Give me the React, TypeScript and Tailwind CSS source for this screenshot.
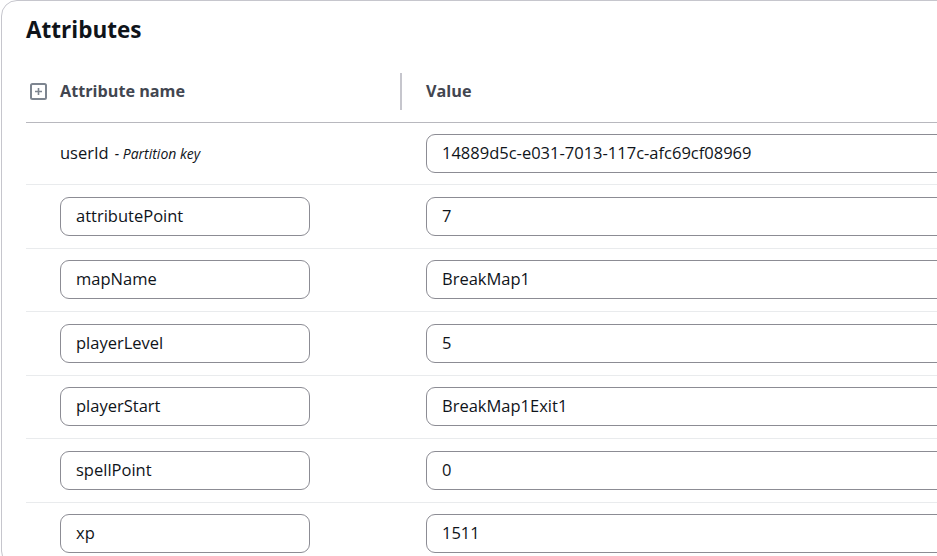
const rows = [
  { name: 'attributePoint', value: '7' },
  { name: 'mapName', value: 'BreakMap1' },
  { name: 'playerLevel', value: '5' },
  { name: 'playerStart', value: 'BreakMap1Exit1' },
  { name: 'spellPoint', value: '0' },
  { name: 'xp', value: '1511' },
]

function ExpandIcon() {
  return (
    <svg width="17" height="17" viewBox="0 0 17 17" className="shrink-0">
      <rect x="1" y="1" width="15" height="15" rx="1.5" fill="none" stroke="#7d8590" strokeWidth="2" />
      <path d="M8.5 5v7M5 8.5h7" stroke="#7d8590" strokeWidth="1.6" />
    </svg>
  )
}

function Field({ value, className }: { value: string; className: string }) {
  return (
    <div
      className={`flex h-[39px] items-center rounded-[9px] border border-[#8c8c94] bg-white pl-[15px] text-[16.5px] text-[#0f141a] ${className}`}
    >
      {value}
    </div>
  )
}

export default function App() {
  return (
    <div
      className="h-[556px] w-[937px] overflow-hidden bg-white"
      style={{ fontFamily: '"Open Sans", "Noto Sans", sans-serif' }}
    >
      <div className="ml-[1px] w-[1100px] rounded-[16px] border border-[#c6c6cd] pl-[24px] pt-[13px]">
        <h2 className="h-[32px] text-[22.5px] font-bold leading-[32px] text-[#0f141a]">Attributes</h2>

        <div className="mt-[24px]">
          {/* header */}
          <div className="grid h-[53px] grid-cols-[374px_1fr] border-b border-[#b8b8be]">
            <div className="flex items-center gap-[13px] pl-[4px] pb-[10px]">
              <ExpandIcon />
              <span className="text-[16.2px] font-bold text-[#424650]">Attribute name</span>
            </div>
            <div className="flex items-center pb-[10px]">
              <div className="h-[37px] w-[2px] bg-[#c6c6cd]" />
              <span className="ml-[24px] text-[16.2px] font-bold text-[#424650]">Value</span>
            </div>
          </div>

          {/* partition key row */}
          <div className="grid h-[62px] grid-cols-[374px_1fr] items-center border-b border-[#e9ebed]">
            <div className="flex items-baseline pl-[34px] text-[#0f141a]">
              <span className="text-[16.5px]">userId</span>
              <span className="ml-[6px] text-[14px] italic">- Partition key</span>
            </div>
            <div className="pl-[26px]">
              <Field value="14889d5c-e031-7013-117c-afc69cf08969" className="w-[640px]" />
            </div>
          </div>

          {rows.map((r) => (
            <div
              key={r.name}
              className="grid h-[63.5px] grid-cols-[374px_1fr] items-center border-b border-[#e9ebed]"
            >
              <div className="pl-[34px]">
                <Field value={r.name} className="w-[250px]" />
              </div>
              <div className="pl-[26px]">
                <Field value={r.value} className="w-[640px]" />
              </div>
            </div>
          ))}
        </div>
      </div>
    </div>
  )
}
